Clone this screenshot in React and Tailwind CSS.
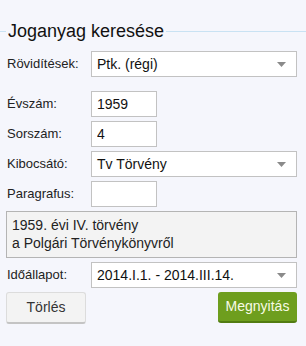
import { useState } from 'react';

function Arrow() {
  return (
    <svg width="9" height="5" viewBox="0 0 9 5" className="shrink-0">
      <path d="M0 0 L9 0 L4.5 5 Z" fill="#8a8a8a" />
    </svg>
  );
}

function Row({ label, children, className = '' }) {
  return (
    <div className={`flex items-center h-[26px] ${className}`}>
      <div className="w-[84px] text-[13px] text-[#222]">{label}</div>
      {children}
    </div>
  );
}

function Select({ value }) {
  return (
    <div className="flex-1 h-[26px] bg-white border border-[#c2c2c2] flex items-center justify-between pl-[5px] pr-[10px] text-[14px] text-[#111]">
      <span>{value}</span>
      <Arrow />
    </div>
  );
}

function Field({ value }) {
  return (
    <input
      className="w-[66px] h-[26px] bg-white border border-[#c2c2c2] px-[5px] text-[14px] text-[#111] outline-none"
      defaultValue={value}
    />
  );
}

export default function App() {
  const [year] = useState('1959');

  return (
    <div className="w-[306px] h-[346px] bg-[#f5f6fc] font-['Liberation_Sans',Arial,sans-serif] pl-[7px] pr-[9px] pt-[20px]">
      <div className="flex items-center -ml-[7px] -mr-[9px] h-[22px]">
        <div className="w-[6px] h-px bg-[#c9e2f3]" />
        <div className="px-[2px] text-[18px] leading-[22px] text-[#111]">Joganyag keresése</div>
        <div className="flex-1 h-px bg-[#c9e2f3]" />
      </div>

      <div className="flex flex-col gap-[4px] mt-[9px]">
        <Row label="Rövidítések:">
          <Select value="Ptk. (régi)" />
        </Row>
        <Row label="Évszám:" className="mt-[10px]">
          <Field value={year} />
        </Row>
        <Row label="Sorszám:">
          <Field value="4" />
        </Row>
        <Row label="Kibocsátó:">
          <Select value="Tv Törvény" />
        </Row>
        <Row label="Paragrafus:">
          <Field value="" />
        </Row>
        <div className="-ml-px h-[47px] bg-[#f3f3f3] border border-[#b4b4b4] px-[5px] py-[4px] text-[14px] leading-[18px] text-[#222]">
          <div>1959. évi IV. törvény</div>
          <div>a Polgári Törvénykönyvről</div>
        </div>
        <Row label="Időállapot:">
          <Select value="2014.I.1. - 2014.III.14." />
        </Row>
        <div className="flex justify-between items-start">
          <button className="-ml-px w-[80px] h-[32px] rounded-[3px] bg-[#f3f3f3] border border-[#dcdcdc] border-b-[#c4c4c4] border-b-2 text-[14px] text-[#333]">
            Törlés
          </button>
          <button className="w-[79px] h-[31px] rounded-[3px] bg-[#6e9e1e] border-b-2 border-[#527c12] text-[14px] text-[#f8fbe6]">
            Megnyitás
          </button>
        </div>
      </div>
    </div>
  );
}
